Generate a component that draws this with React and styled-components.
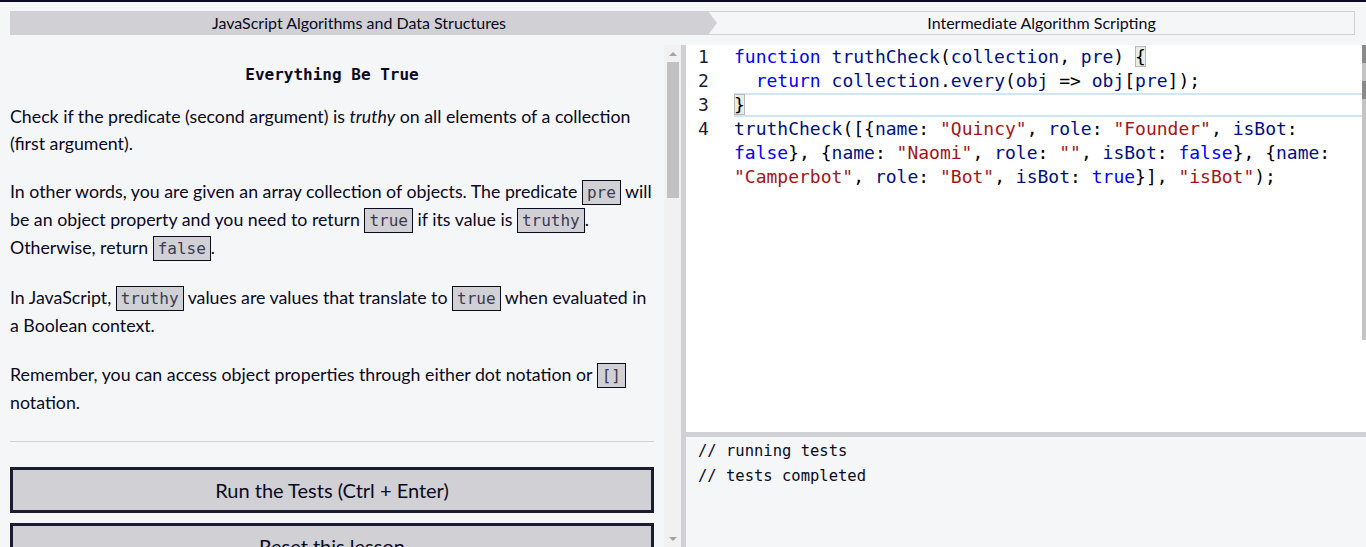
import React from "react";
import styled, { createGlobalStyle } from "styled-components";

const GlobalStyle = createGlobalStyle`
  html, body {
    margin: 0;
    padding: 0;
    background: #f5f6f7;
    overflow: hidden;
  }
  body {
    font-family: Lato, "Noto Sans", sans-serif;
    color: #0a0a23;
  }
`;

const mono = `"DejaVu Sans Mono", "Liberation Mono", monospace`;

const Page = styled.div`
  height: 547px;
  box-sizing: border-box;
  border-top: 2px solid #0a0a23;
  display: flex;
  flex-direction: column;
`;

const Breadcrumbs = styled.nav`
  height: 43px;
  box-sizing: border-box;
  padding: 9px 11px 0 10px;
  display: flex;
  align-items: flex-start;
  flex-shrink: 0;
`;

const CrumbSuper = styled.div`
  position: relative;
  z-index: 1;
  flex: 0 0 707px;
  height: 24px;
  background: #d0d0d5;
  clip-path: polygon(0 0, calc(100% - 9px) 0, 100% 50%, calc(100% - 9px) 100%, 0 100%);
  display: flex;
  align-items: center;
  justify-content: center;
  padding: 0 9px 2px 0;
  box-sizing: border-box;
  font-size: 16px;
`;

const CrumbSub = styled.div`
  flex: 1;
  margin-left: -9px;
  height: 24px;
  box-sizing: border-box;
  border: 1px solid #d0d0d5;
  padding: 0 0 2px 20px;
  display: flex;
  align-items: center;
  justify-content: center;
  font-size: 16px;
`;

const Main = styled.div`
  flex: 1;
  min-height: 0;
  display: flex;
`;

const LeftPane = styled.section`
  width: 664px;
  flex-shrink: 0;
  box-sizing: border-box;
  padding: 19px 10px 0;
  overflow: hidden;
`;

const Title = styled.h2`
  margin: 0 0 17px;
  text-align: center;
  font-family: ${mono};
  font-weight: bold;
  font-size: 16px;
  line-height: 22px;
`;

const Para = styled.p`
  margin: 0 0 ${(p) => (p.$tight ? 21 : 22)}px;
  font-size: 17.75px;
  line-height: 27px;
`;

const Code = styled.code`
  font-family: ${mono};
  font-size: 16px;
  color: #3b3b4f;
  background: #d0d0d5;
  border: 1px solid #0a0a23;
  padding: 2px 4px;
`;

const Rule = styled.hr`
  border: 0;
  border-top: 1px solid #d0d0d5;
  margin: 25px 0 25px;
`;

const Button = styled.button`
  display: block;
  width: 100%;
  height: 46px;
  margin-bottom: 10px;
  box-sizing: border-box;
  background: #d0d0d5;
  border: 3px solid #1b1b32;
  font-family: Lato, sans-serif;
  font-size: 20px;
  color: #0a0a23;
  cursor: pointer;
`;

const ScrollTrack = styled.div`
  width: 17px;
  flex-shrink: 0;
  background: #f1f1f1;
  display: flex;
  flex-direction: column;
  align-items: center;
`;

const Arrow = styled.div`
  height: 17px;
  display: flex;
  align-items: center;
  justify-content: center;
  &::before {
    content: "";
    border-left: 4px solid transparent;
    border-right: 4px solid transparent;
    ${(p) =>
      p.$down
        ? "border-top: 4px solid #a3a3a3;"
        : "border-bottom: 4px solid #a3a3a3;"}
  }
`;

const Thumb = styled.div`
  width: 12px;
  height: 136px;
  margin-left: 1px;
  background: #c1c1c1;
`;

const Spacer = styled.div`
  flex: 1;
`;

const VDivider = styled.div`
  width: 5px;
  flex-shrink: 0;
  background: #d0d0d5;
`;

const RightPane = styled.section`
  flex: 1;
  display: flex;
  flex-direction: column;
`;

const Editor = styled.div`
  position: relative;
  height: 387px;
  flex-shrink: 0;
  background: #ffffff;
  font-family: ${mono};
  font-size: 18px;
`;

const Line = styled.div`
  display: flex;
  height: 24px;
  line-height: 24px;
`;

const LineNo = styled.span`
  width: 48px;
  flex-shrink: 0;
  box-sizing: border-box;
  padding-left: 12px;
  color: #1b1b32;
`;

const LineCode = styled.span`
  flex: 1;
  margin-right: 4px;
  white-space: pre;
  box-sizing: border-box;
  ${(p) =>
    p.$active &&
    `border-top: 2px solid #cfe6f7; border-bottom: 2px solid #cfe6f7; line-height: 20px;`}
`;

const Tok = styled.span`
  color: ${(p) =>
    ({ kw: "#0000ff", id: "#001080", str: "#a31515", pn: "#000000" }[p.$t] ||
    "#000000")};
`;

const Bracket = styled.span`
  background: rgba(0, 100, 0, 0.1);
  outline: 1px solid #b9b9b9;
  outline-offset: -1px;
`;

const EditorScroll = styled.div`
  position: absolute;
  top: 0;
  right: 0;
  width: 4px;
  height: 295px;
  background: #c4c4c4;
  display: flex;
  flex-direction: column;
  gap: 18px;
  &::before,
  &::after {
    content: "";
    height: 18px;
    background: #8a8a8a;
  }
`;

const HDivider = styled.div`
  height: 5px;
  flex-shrink: 0;
  background: #d0d0d5;
`;

const Output = styled.pre`
  flex: 1;
  margin: 0;
  padding: 2px 12px 0;
  font-family: ${mono};
  font-size: 15.5px;
  line-height: 25px;
  color: #0a0a23;
`;

const K = ({ children }) => <Tok $t="kw">{children}</Tok>;
const I = ({ children }) => <Tok $t="id">{children}</Tok>;
const S = ({ children }) => <Tok $t="str">{children}</Tok>;
const P = ({ children }) => <Tok $t="pn">{children}</Tok>;

const codeLines = [
  {
    no: 1,
    code: (
      <>
        <K>function</K> <I>truthCheck</I>
        <P>(</P>
        <I>collection</I>
        <P>, </P>
        <I>pre</I>
        <P>) </P>
        <Bracket>
          <P>{"{"}</P>
        </Bracket>
      </>
    ),
  },
  {
    no: 2,
    code: (
      <>
        {"  "}
        <K>return</K> <I>collection</I>
        <P>.</P>
        <I>every</I>
        <P>(</P>
        <I>obj</I> <P>{"=>"}</P> <I>obj</I>
        <P>[</P>
        <I>pre</I>
        <P>]);</P>
      </>
    ),
  },
  {
    no: 3,
    active: true,
    code: (
      <Bracket>
        <P>{"}"}</P>
      </Bracket>
    ),
  },
  {
    no: 4,
    code: (
      <>
        <I>truthCheck</I>
        <P>([{"{"}</P>
        <I>name</I>
        <P>: </P>
        <S>"Quincy"</S>
        <P>, </P>
        <I>role</I>
        <P>: </P>
        <S>"Founder"</S>
        <P>, </P>
        <I>isBot</I>
        <P>:</P>
      </>
    ),
  },
  {
    no: "",
    code: (
      <>
        <K>false</K>
        <P>{"}, {"}</P>
        <I>name</I>
        <P>: </P>
        <S>"Naomi"</S>
        <P>, </P>
        <I>role</I>
        <P>: </P>
        <S>""</S>
        <P>, </P>
        <I>isBot</I>
        <P>: </P>
        <K>false</K>
        <P>{"}, {"}</P>
        <I>name</I>
        <P>:</P>
      </>
    ),
  },
  {
    no: "",
    code: (
      <>
        <S>"Camperbot"</S>
        <P>, </P>
        <I>role</I>
        <P>: </P>
        <S>"Bot"</S>
        <P>, </P>
        <I>isBot</I>
        <P>: </P>
        <K>true</K>
        <P>{"}], "}</P>
        <S>"isBot"</S>
        <P>);</P>
      </>
    ),
  },
];

export default function App() {
  return (
    <>
      <GlobalStyle />
      <Page>
        <Breadcrumbs>
          <CrumbSuper>JavaScript Algorithms and Data Structures</CrumbSuper>
          <CrumbSub>Intermediate Algorithm Scripting</CrumbSub>
        </Breadcrumbs>
        <Main>
          <LeftPane>
            <Title>Everything Be True</Title>
            <Para $tight>
              Check if the predicate (second argument) is <em>truthy</em> on all
              elements of a collection (first argument).
            </Para>
            <Para>
              In other words, you are given an array collection of objects. The
              predicate <Code>pre</Code> will be an object property and you need
              to return <Code>true</Code> if its value is <Code>truthy</Code>.
              Otherwise, return <Code>false</Code>.
            </Para>
            <Para>
              In JavaScript, <Code>truthy</Code> values are values that translate
              to <Code>true</Code> when evaluated in a Boolean context.
            </Para>
            <Para>
              Remember, you can access object properties through either dot
              notation or <Code>[]</Code> notation.
            </Para>
            <Rule />
            <Button>Run the Tests (Ctrl + Enter)</Button>
            <Button>Reset this lesson</Button>
          </LeftPane>
          <ScrollTrack>
            <Arrow />
            <Thumb />
            <Spacer />
            <Arrow $down />
          </ScrollTrack>
          <VDivider />
          <RightPane>
            <Editor>
              {codeLines.map((l, i) => (
                <Line key={i}>
                  <LineNo>{l.no}</LineNo>
                  <LineCode $active={l.active}>{l.code}</LineCode>
                </Line>
              ))}
              <EditorScroll />
            </Editor>
            <HDivider />
            <Output>{"// running tests\n// tests completed"}</Output>
          </RightPane>
        </Main>
      </Page>
    </>
  );
}
